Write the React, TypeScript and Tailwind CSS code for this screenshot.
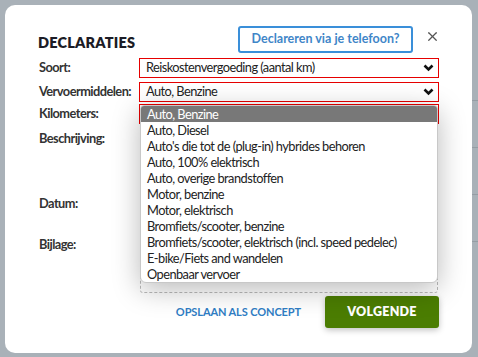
import { X } from "lucide-react";

const options = [
  "Auto, Benzine",
  "Auto, Diesel",
  "Auto's die tot de (plug-in) hybrides behoren",
  "Auto, 100% elektrisch",
  "Auto, overige brandstoffen",
  "Motor, benzine",
  "Motor, elektrisch",
  "Bromfiets/scooter, benzine",
  "Bromfiets/scooter, elektrisch (incl. speed pedelec)",
  "E-bike/Fiets and wandelen",
  "Openbaar vervoer",
];

function Chevron() {
  return (
    <svg width="11" height="8" viewBox="0 0 11 8" className="shrink-0">
      <polyline points="1.5,1.5 5.5,5.5 9.5,1.5" fill="none" stroke="#111" strokeWidth="2.6" />
    </svg>
  );
}

function Select({ value }: { value: string }) {
  return (
    <div className="h-[20px] border border-[#e60000] flex items-center justify-between pl-[6px] pr-[4px] text-[#222]">
      <span>{value}</span>
      <Chevron />
    </div>
  );
}

export default function App() {
  return (
    <div
      className="w-[478px] h-[357px] bg-[#a9b1b8] relative overflow-hidden"
      style={{ fontFamily: "Lato, 'Open Sans', sans-serif" }}
    >
      {/* dimmed page behind */}
      <div className="absolute left-[472px] top-[30px] w-[6px] h-[300px] flex flex-col gap-[46px] pt-[70px]">
        <div className="border-t border-[#959da4]" />
        <div className="border-t border-[#959da4]" />
        <div className="border-t border-[#959da4]" />
        <div className="border-t border-[#959da4]" />
      </div>

      <div className="absolute left-[5px] top-[5px] w-[467px] h-[348px] bg-white rounded-[10px] pl-[33px] pr-[33px] pt-[21px]">
        <div className="flex items-center h-[27px]">
          <h1 className="text-[14.5px] font-extrabold text-[#1c1c26] tracking-[0.2px] mt-[6px]">DECLARATIES</h1>
          <div className="ml-auto w-[175px] h-[27px] border-2 border-[#3a8fd9] rounded-[3px] flex items-center justify-center text-[12.5px] font-bold text-[#3f86c8]">
            Declareren via je telefoon?
          </div>
          <X className="ml-[12px] mr-[-1px] w-[15px] h-[15px] text-[#555] mb-[7px]" strokeWidth={2} />
        </div>

        <div className="grid grid-cols-[101px_300px] mt-[5px] text-[12.8px] tracking-[-0.55px] relative">
          <div className="font-bold text-[#333] h-[20px] flex items-center pl-[1px]">Soort:</div>
          <Select value="Reiskostenvergoeding (aantal km)" />

          <div className="font-bold text-[#333] h-[20px] flex items-center mt-[4px] pl-[1px]">Vervoermiddelen:</div>
          <div className="mt-[4px]">
            <Select value="Auto, Benzine" />
          </div>

          <div className="font-bold text-[#333] h-[20px] flex items-center mt-[2px] pl-[1px]">Kilometers:</div>
          <div className="mt-[2px] h-[20px] border border-[#e60000]" />

          <div className="font-bold text-[#333] h-[20px] flex items-start mt-[4px] pt-[1px] pl-[1px]">Beschrijving:</div>
          <div className="mt-[4px] h-[58px]" />

          <div className="font-bold text-[#333] h-[20px] flex items-center mt-[8px] pl-[1px]">Datum:</div>
          <div className="mt-[8px] h-[20px]" />

          <div className="font-bold text-[#333] h-[20px] flex items-center mt-[21px] pl-[1px]">Bijlage:</div>
          <div className="mt-[21px] h-[58px] border border-dashed border-[#bbb] rounded-[3px] ml-[1px] mr-[1px]" />

          {/* open dropdown list */}
          <div className="absolute left-[102px] top-[47px] w-[298px] bg-white border border-[#c8c8c8] rounded-b-[6px] rounded-t-[4px] shadow-[0_6px_28px_rgba(0,0,0,0.28)] overflow-hidden">
            {options.map((o, i) => (
              <div
                key={o}
                className={`h-[16px] leading-[16px] px-[6px] whitespace-nowrap ${
                  i === 0 ? "bg-[#787878] text-white" : "text-[#222]"
                }`}
              >
                {o}
              </div>
            ))}
          </div>
        </div>

        <div className="flex items-center justify-end mt-[3px]">
          <span className="text-[11px] font-bold text-[#2f7dc4] tracking-[-0.1px] mr-[24px]">OPSLAAN ALS CONCEPT</span>
          <div className="w-[114px] h-[32px] bg-[#4b7d02] rounded-[3px] flex items-center justify-center text-white font-extrabold text-[12.5px] tracking-[0.2px] shadow-[0_2px_6px_rgba(0,0,0,0.25)]">
            VOLGENDE
          </div>
        </div>
      </div>
    </div>
  );
}
